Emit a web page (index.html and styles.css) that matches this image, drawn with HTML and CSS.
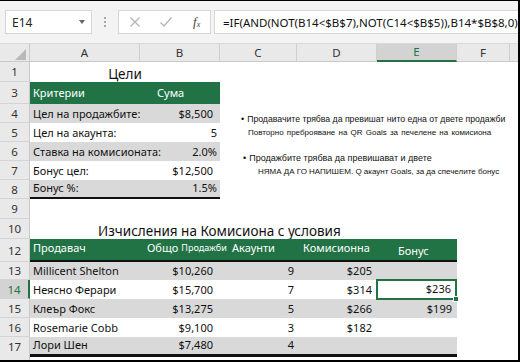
FILE: index.html
```html
<!DOCTYPE html>
<html>
<head>
<meta charset="utf-8">
<link rel="stylesheet" href="styles.css">
</head>
<body>
<div class="app">
  <div class="fbar">
    <div class="namebox"><span>E14</span><span class="caret"></span></div>
    <div class="dots"><i></i><i></i><i></i></div>
    <div class="btns">
      <svg class="ico" width="12" height="12" viewBox="0 0 12 12"><path d="M1.5 1.5L10.5 10.5M10.5 1.5L1.5 10.5" stroke="#b4b4b4" stroke-width="1.3" fill="none"/></svg>
      <svg class="ico" width="14" height="12" viewBox="0 0 14 12"><path d="M1.5 6.5L5 10L12.5 1.5" stroke="#b4b4b4" stroke-width="1.3" fill="none"/></svg>
      <span class="fx">f<sub>x</sub></span>
    </div>
    <div class="formula">=IF(AND(NOT(B14&lt;$B$7),NOT(C14&lt;$B$5)),B14*$B$8,0)</div>
  </div>

  <div class="sheet">
    <div class="row colhdr">
      <div class="corner"><span class="tri"></span></div>
      <div class="ch">A</div><div class="ch">B</div><div class="ch">C</div><div class="ch">D</div><div class="ch sel">E</div><div class="ch">F</div><div class="ch last"></div>
    </div>

    <div class="row r1"><div class="rh">1</div><div class="c title1">Цели</div></div>

    <div class="row r3"><div class="rh">3</div><div class="c hd">Критерии</div><div class="c hd sum">Сума</div></div>
    <div class="row r4"><div class="rh">4</div><div class="c band fa">Цел на продажбите:</div><div class="c band num acc">$8,500</div></div>
    <div class="row r5"><div class="rh">5</div><div class="c fa">Цел на акаунта:</div><div class="c num">5</div></div>
    <div class="row r6"><div class="rh">6</div><div class="c band fa">Ставка на комисионата:</div><div class="c band num">2.0%</div></div>
    <div class="row r7"><div class="rh">7</div><div class="c fa">Бонус цел:</div><div class="c num acc">$12,500</div></div>
    <div class="row r8"><div class="rh">8</div><div class="c band bot fa">Бонус %:</div><div class="c band num bot">1.5%</div></div>
    <div class="row r9"><div class="rh">9</div></div>
    <div class="row r10"><div class="rh">10</div><div class="c title2">Изчисления на Комисиона с условия</div></div>

    <div class="row r12"><div class="rh">12</div>
      <div class="c hd bot">Продавач</div>
      <div class="c hd bot obshto">Общо <small>Продажби</small></div>
      <div class="c hd bot akk">Акаунти</div>
      <div class="c hd bot kom">Комисионна</div>
      <div class="c hd bot bon">Бонус</div>
    </div>
    <div class="row r13"><div class="rh">13</div>
      <div class="c band fa">Millicent Shelton</div><div class="c band num acc">$10,260</div><div class="c band num cc">9</div><div class="c band num dd">$205</div><div class="c band num ee"></div>
    </div>
    <div class="row r14"><div class="rh active">14</div>
      <div class="c fa">Неясно Ферари</div><div class="c num acc">$15,700</div><div class="c num cc">7</div><div class="c num dd">$314</div><div class="c num ee selcell">$236<span class="handle"></span></div>
    </div>
    <div class="row r15"><div class="rh">15</div>
      <div class="c band fa">Клеър Фокс</div><div class="c band num acc">$13,275</div><div class="c band num cc">5</div><div class="c band num dd">$266</div><div class="c band num ee">$199</div>
    </div>
    <div class="row r16"><div class="rh">16</div>
      <div class="c fa">Rosemarie Cobb</div><div class="c num acc">$9,100</div><div class="c num cc">3</div><div class="c num dd">$182</div><div class="c num ee"></div>
    </div>
    <div class="row r17"><div class="rh">17</div>
      <div class="c band bot3 fa">Лори Шен</div><div class="c band num acc bot3">$7,480</div><div class="c band num cc bot3">4</div><div class="c band num dd bot3"></div><div class="c band num ee bot3"></div>
    </div>
    <div class="row r18"><div class="rh">18</div></div>
  </div>

  <div class="note">
    <p class="b1"><span class="dot">•</span>Продавачите трябва да превишат нито една от двете продажби</p>
    <p class="l2">Повторно преброяване на QR Goals за печелене на комисиона</p>
    <p class="b2"><span class="dot">•</span>Продажбите трябва да превишават и двете</p>
    <p class="l4">НЯМА ДА ГО НАПИШЕМ. Q акаунт Goals, за да спечелите бонус</p>
  </div>
</div>
</body>
</html>
```

FILE: styles.css
```css
* { box-sizing: border-box; }
html, body { margin: 0; padding: 0; background: #fff; }
body { width: 520px; height: 362px; overflow: hidden; font-family: "Noto Sans", "Open Sans", sans-serif; }

.app {
  position: relative;
  width: 520px;
  height: 362px;
  border-top: 1px solid #000;
  border-right: 2px solid #000;
  border-bottom: 2px solid #000;
  overflow: hidden;
  background: #fff;
}

/* formula bar */
.fbar {
  height: 43px;
  background: #f3f3f3;
  display: flex;
  align-items: center;
  padding: 0 0 0 5px;
  border-bottom: 1px solid #dadada;
}
.namebox {
  width: 87px;
  height: 24px;
  background: #fff;
  border: 1px solid #d6d6d6;
  display: flex;
  align-items: center;
  justify-content: space-between;
  padding: 0 6px 0 6px;
  font-size: 12px;
  color: #222;
}
.caret {
  width: 0; height: 0;
  border-left: 3.5px solid transparent;
  border-right: 3.5px solid transparent;
  border-top: 4px solid #666;
}
.dots {
  width: 26px;
  display: flex;
  flex-direction: column;
  align-items: center;
  gap: 2px;
}
.dots i { display: block; width: 2px; height: 2px; background: #a8a8a8; }
.btns {
  width: 93px;
  height: 24px;
  background: #fff;
  border: 1px solid #d6d6d6;
  display: flex;
  align-items: center;
  padding-left: 10px;
  gap: 18px;
}
.ico { display: block; }
.fx {
  font-family: "Liberation Serif", serif;
  font-style: italic;
  font-size: 13px;
  color: #444;
  margin-left: 2px;
}
.fx sub { font-size: 8px; vertical-align: -1px; }
.formula {
  flex: 1;
  margin-left: 3px;
  height: 24px;
  background: #fff;
  border: 1px solid #d6d6d6;
  border-right: none;
  display: flex;
  align-items: center;
  padding-left: 8px;
  font-size: 11.5px;
  color: #111;
  white-space: nowrap;
  overflow: hidden;
}

/* sheet */
.sheet { display: flex; flex-direction: column; }
.row {
  display: grid;
  grid-template-columns: 30px 110px 80px 77px 80px 80px 53px 1fr;
  font-size: 11px;
  color: #111;
}
.colhdr { height: 18px; background: #e9e9e9; border-bottom: 1px solid #c9c9c9; }
.corner { position: relative; border-right: 1px solid #c9c9c9; }
.tri {
  position: absolute; right: 3px; bottom: 2px;
  width: 0; height: 0;
  border-left: 11px solid transparent;
  border-bottom: 11px solid #b9b9b9;
}
.ch {
  border-right: 1px solid #cfcfcf;
  text-align: center;
  font-size: 11.5px;
  line-height: 17px;
  color: #333;
}
.ch.last { border-right: none; }
.ch.sel { background: #d3d3d3; color: #217346; border-bottom: 2px solid #217346; line-height: 16px; }

.rh {
  grid-column: 1;
  background: #e9e9e9;
  border-right: 1px solid #c9c9c9;
  border-bottom: 1px solid #d4d4d4;
  text-align: center;
  font-size: 11.5px;
  color: #333;
  display: flex;
  align-items: center;
  justify-content: center;
}
.rh.active { background: #d3d3d3; color: #217346; border-right: 2px solid #217346; }

.c {
  display: flex;
  align-items: flex-end;
  padding: 0 3px 1px 3px;
  white-space: nowrap;
  overflow: visible;
  line-height: 16px;
}
.fa, .obshto { position: relative; z-index: 1; }
.num { justify-content: flex-end; }
.acc { padding-right: 7px; }
.band { background: #d9d9d9; }
.hd { background: #217346; color: #fff; }
.bot { border-bottom: 2px solid #111; }
.bot3 { border-bottom: 3px solid #111; }

.r1 { height: 20px; }
.r3 { height: 22px; }
.r4, .r5, .r6, .r7 { height: 19px; }
.r8 { height: 19px; }
.r9 { height: 20px; }
.r10 { height: 20px; }
.r12 { height: 23px; }
.r13 { height: 18px; }
.r14, .r15, .r16 { height: 19px; }
.r17 { height: 19px; }
.r18 { height: 12px; }

.title1 { grid-column: 2 / 4; justify-content: center; font-size: 13.5px; padding-bottom: 0; }
.title2 { grid-column: 2 / 7; padding-left: 68px; font-size: 13.5px; padding-bottom: 0; }

.r3 .c { padding-bottom: 3px; }
.sum { padding-left: 17px; }

.r12 .c { padding-bottom: 4px; }
.obshto { justify-content: flex-start; padding-left: 7px; }
.obshto small { font-size: 9px; margin-left: 3px; }
.akk { padding-left: 12px; }
.kom { padding-left: 6px; }
.bon { padding-left: 21px; padding-bottom: 1px !important; }

.cc { padding-right: 3px; }
.dd { padding-right: 5px; }
.ee { padding-right: 5px; }

.selcell {
  position: relative;
  border: 2px solid #217346;
  margin: -1px 0 -1px -1px;
  padding-right: 4px;
}
.handle {
  position: absolute;
  right: -4px; bottom: -4px;
  width: 6px; height: 6px;
  background: #217346;
  border: 1px solid #fff;
}

/* floating text box */
.note {
  position: absolute;
  left: 241px;
  top: 112px;
  width: 275px;
  font-family: "Liberation Sans", Arial, sans-serif;
  color: #111;
}
.note p { margin: 0; white-space: nowrap; }
.note .dot { font-size: 9px; margin-right: 3px; }
.b1 { font-size: 8.7px; line-height: 13px; }
.l2 { font-size: 8px; line-height: 12px; padding-left: 7px; margin-top: 1px !important; word-spacing: 1px; }
.b2 { font-size: 9px; line-height: 13px; padding-left: 2px; margin-top: 13px !important; }
.l4 { font-size: 8px; line-height: 12px; padding-left: 17px; margin-top: 1px !important; }
```
